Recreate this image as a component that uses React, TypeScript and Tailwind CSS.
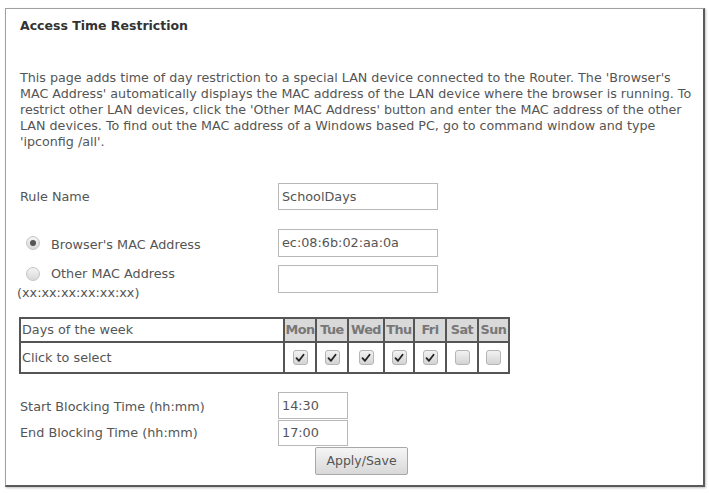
import React from "react";

const font = { fontFamily: '"DejaVu Sans", Verdana, sans-serif' };

function Check({ on }: { on: boolean }) {
  return (
    <div className="mx-auto w-[15px] h-[15px] rounded-[3px] border border-[#b5b5b5] bg-gradient-to-b from-[#f2f2f2] to-[#d4d4d4] flex items-center justify-center">
      {on && (
        <svg width="10" height="10" viewBox="0 0 10 10">
          <path d="M1.5 5.2 L4 7.8 L8.6 1.8" fill="none" stroke="#222" strokeWidth="1.8" strokeLinecap="round" strokeLinejoin="round" />
        </svg>
      )}
    </div>
  );
}

function Radio({ on }: { on: boolean }) {
  return (
    <div className="w-[14px] h-[14px] rounded-full border border-[#c4c4c4] bg-gradient-to-b from-[#f4f4f4] to-[#d8d8d8] flex items-center justify-center">
      {on && <div className="w-[6px] h-[6px] rounded-full bg-[#555]" />}
    </div>
  );
}

export default function App() {
  const days = [
    { d: "Mon", w: "w-[32px]", on: true },
    { d: "Tue", w: "w-[32px]", on: true },
    { d: "Wed", w: "w-[36px]", on: true },
    { d: "Thu", w: "w-[30px]", on: true },
    { d: "Fri", w: "w-[32px]", on: true },
    { d: "Sat", w: "w-[32px]", on: false },
    { d: "Sun", w: "w-[31px]", on: false },
  ];
  return (
    <div className="w-[709px] h-[493px] bg-white overflow-hidden pt-[8px] pl-[5px]" style={font}>
      <div className="w-[700px] h-[479px] border-l border-t border-[#a0a0a0] border-r-2 border-b-2 border-r-[#5a5a5a] border-b-[#5a5a5a] shadow-[1px_1px_2px_rgba(0,0,0,0.25)] pl-[14px] text-[12.8px] text-[#555] leading-[16px]">
        <div className="pt-[9px] font-bold text-[#333] text-[12.5px]">Access Time Restriction</div>
        <div className="mt-[36px] whitespace-nowrap text-[12.7px]">
          This page adds time of day restriction to a special LAN device connected to the Router. The 'Browser's
          <br />
          MAC Address' automatically displays the MAC address of the LAN device where the browser is running. To
          <br />
          restrict other LAN devices, click the 'Other MAC Address' button and enter the MAC address of the other
          <br />
          LAN devices. To find out the MAC address of a Windows based PC, go to command window and type
          <br />
          'ipconfig /all'.
        </div>

        <div className="mt-[33px] flex items-center h-[27px]">
          <div className="w-[258px]">Rule Name</div>
          <div className="w-[160px] h-[27px] border border-[#b8b8b8] px-[3px] flex items-center">SchoolDays</div>
        </div>

        <div className="mt-[19px] flex h-[28px]">
          <div className="w-[258px] flex items-center pl-[6px] gap-[11px]">
            <Radio on={true} />
            <span className="mt-[4px]">Browser's MAC Address</span>
          </div>
          <div className="w-[160px] h-[28px] border border-[#b8b8b8] px-[3px] flex items-center">ec:08:6b:02:aa:0a</div>
        </div>

        <div className="mt-[8px] flex">
          <div className="w-[258px]">
            <div className="flex items-center pl-[6px] gap-[11px]">
              <Radio on={false} />
              <span className="mt-[1px]">Other MAC Address</span>
            </div>
            <div className="mt-[3px] -ml-[3px]">(xx:xx:xx:xx:xx:xx)</div>
          </div>
          <div className="w-[160px] h-[28px] border border-[#b8b8b8]" />
        </div>

        <table className="mt-[16px] -ml-[1px] border-collapse border-2 border-[#555] text-[12.8px]">
          <tbody>
            <tr className="h-[24px]">
              <td className="w-[264px] border-2 border-[#555] px-[1px]">Days of the week</td>
              {days.map((x) => (
                <td key={x.d} className={`${x.w} border-2 border-[#555] bg-[#d9d9d9] font-bold text-[#777] text-center p-0 tracking-[-0.5px] overflow-hidden whitespace-nowrap`}>
                  {x.d}
                </td>
              ))}
            </tr>
            <tr className="h-[31px]">
              <td className="border-2 border-[#555] px-[1px]">Click to select</td>
              {days.map((x) => (
                <td key={x.d} className="border-2 border-[#555] p-0">
                  <Check on={x.on} />
                </td>
              ))}
            </tr>
          </tbody>
        </table>

        <div className="mt-[18px] flex items-center h-[27px]">
          <div className="w-[258px] mt-[2px]">Start Blocking Time (hh:mm)</div>
          <div className="w-[70px] h-[27px] border border-[#b8b8b8] px-[3px] flex items-center">14:30</div>
        </div>
        <div className="mt-[1px] flex items-center h-[26px]">
          <div className="w-[258px]">End Blocking Time (hh:mm)</div>
          <div className="w-[70px] h-[26px] border border-[#b8b8b8] px-[3px] flex items-center">17:00</div>
        </div>
        <div className="mt-[1px] pl-[295px]">
          <button className="w-[93px] h-[28px] border border-[#a8a8a8] rounded-[2px] bg-gradient-to-b from-[#f6f6f6] to-[#d8d8d8] text-[12.5px] text-[#555]" style={font}>
            Apply/Save
          </button>
        </div>
      </div>
    </div>
  );
}
